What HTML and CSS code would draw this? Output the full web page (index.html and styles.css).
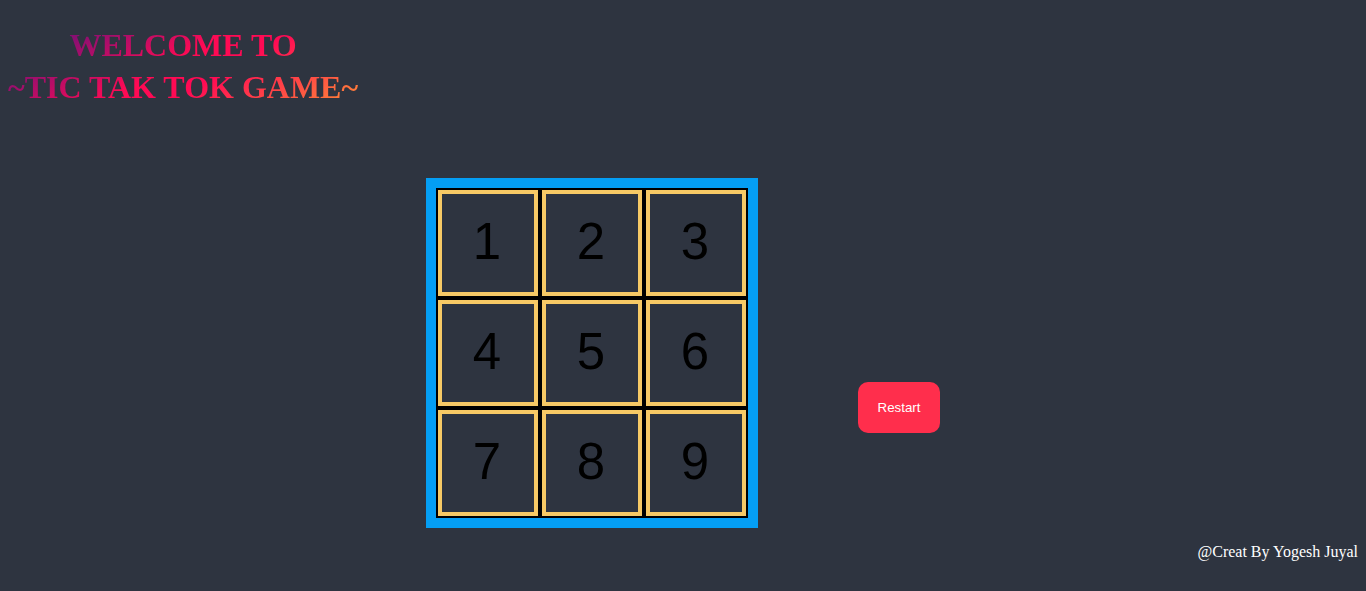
FILE: index.html
```html
<!DOCTYPE html>
<html>
<head>
<meta charset="utf-8">
<title>Tic Tak Tok Game</title>
<link rel="stylesheet" href="styles.css">
</head>
<body>
<header class="header">
  <h1 class="title">WELCOME TO<br>~TIC TAK TOK GAME~</h1>
</header>
<main class="stage">
  <div class="board">
    <div class="cell">1</div>
    <div class="cell">2</div>
    <div class="cell">3</div>
    <div class="cell">4</div>
    <div class="cell">5</div>
    <div class="cell">6</div>
    <div class="cell">7</div>
    <div class="cell">8</div>
    <div class="cell">9</div>
  </div>
  <button class="restart">Restart</button>
</main>
<footer class="footer">@Creat By Yogesh Juyal</footer>
</body>
</html>
```

FILE: styles.css
```css
html, body {
  margin: 0;
  padding: 0;
}
body {
  background: #2e3440;
  font-family: "Liberation Serif", "Times New Roman", serif;
  width: 1366px;
  height: 591px;
  overflow: hidden;
}
.header {
  padding: 24px 0 0 8px;
}
.title {
  display: inline-block;
  margin: 0;
  font-family: "Liberation Serif", "Times New Roman", serif;
  font-weight: bold;
  font-size: 32px;
  line-height: 42px;
  text-align: center;
  background: linear-gradient(150deg, #880f72 18%, #ff0a54 47%, #ff0a54 60%, #ff7c3a 94%);
  -webkit-background-clip: text;
  background-clip: text;
  color: transparent;
}
.stage {
  display: flex;
  align-items: flex-start;
  padding-left: 426px;
  margin-top: 70px;
}
.board {
  display: grid;
  grid-template-columns: repeat(3, 100px);
  grid-auto-rows: 106px;
  gap: 4px;
  padding: 2px;
  background: #000;
  border: 10px solid #049ef4;
}
.cell {
  box-sizing: border-box;
  border: 4px solid #f7c965;
  background: #2e3440;
  display: flex;
  align-items: center;
  justify-content: center;
  font-family: "Liberation Sans", Arial, sans-serif;
  font-size: 51px;
  color: #000;
  padding-bottom: 4px;
  padding-right: 2px;
}
.restart {
  margin-left: 100px;
  margin-top: 204px;
  width: 82px;
  height: 51px;
  border: none;
  border-radius: 10px;
  background: #ff2e4c;
  color: #fff;
  font-family: "Liberation Sans", Arial, sans-serif;
  font-size: 13.333px;
  padding: 0;
}
.footer {
  margin-top: 15px;
  padding-right: 8px;
  text-align: right;
  color: #fff;
  font-size: 16px;
}
```
